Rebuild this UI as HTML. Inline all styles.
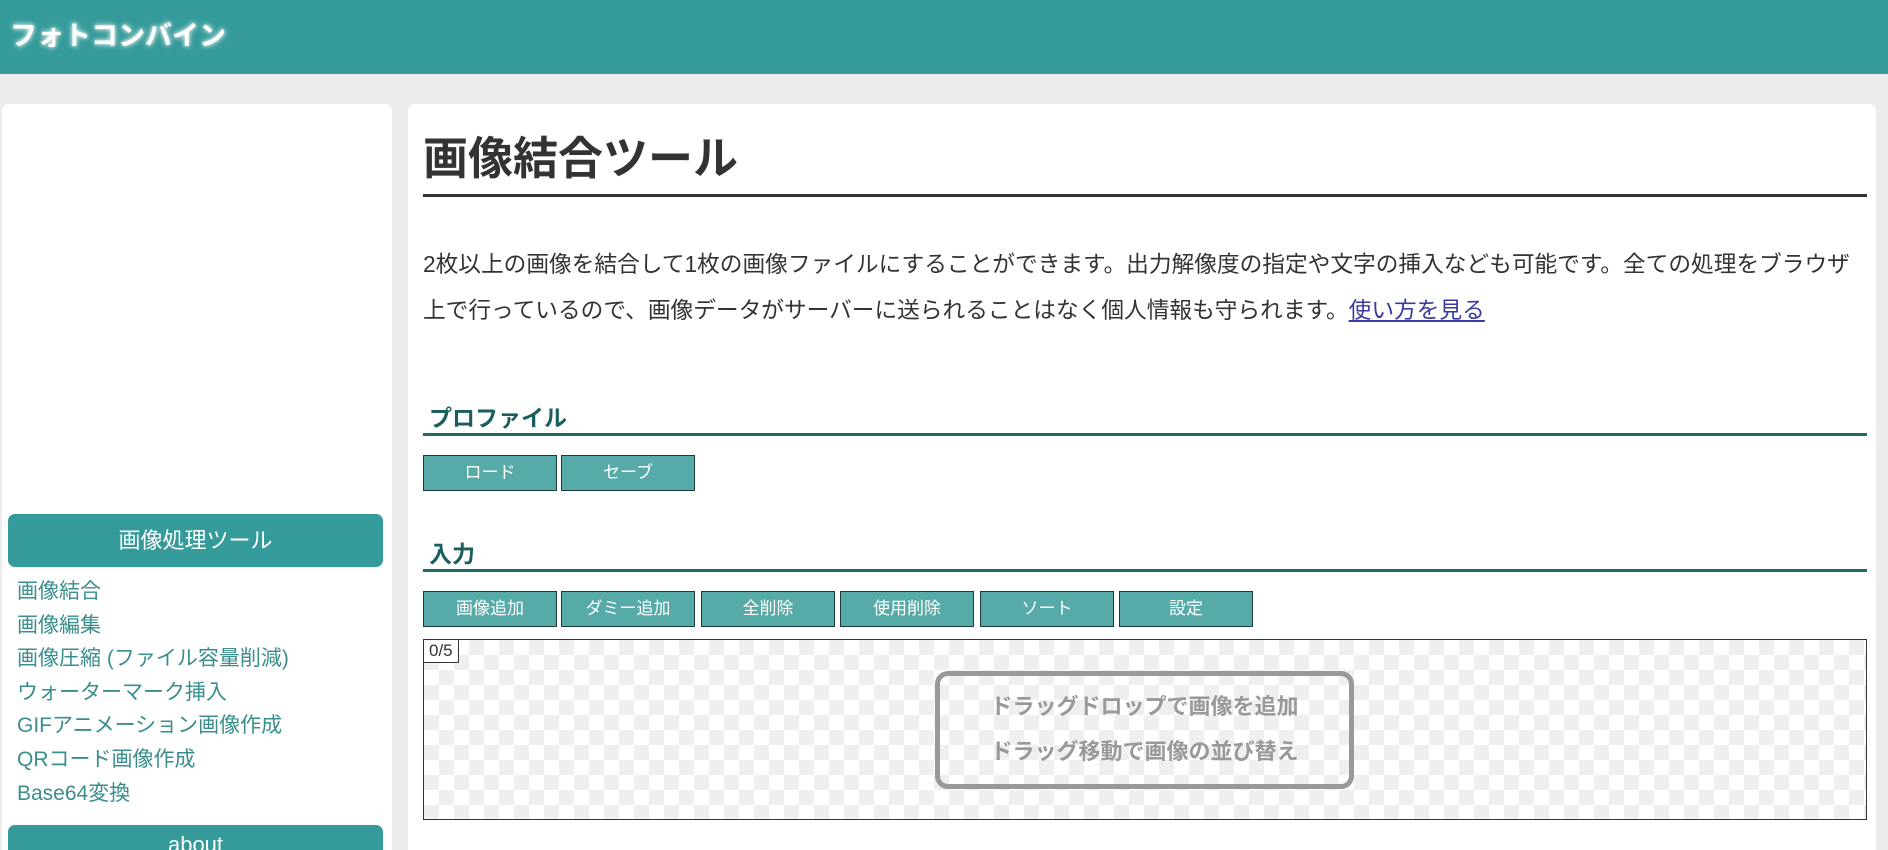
<!DOCTYPE html>
<html style="width:1888px;height:850px;overflow:hidden"><head><meta charset="utf-8"><style>
*{margin:0;padding:0;box-sizing:border-box}
body{width:1888px;height:850px;overflow:hidden;background:#ececec;font-family:"Liberation Sans","Noto Sans CJK JP",sans-serif;color:#333;position:relative}
.hdr{position:absolute;left:0;top:0;width:1888px;height:74px;background:#359b9a}
.hdr span{position:absolute;left:10px;top:14px;font-size:27px;font-weight:bold;color:#fff;text-shadow:0 0 6px #fff,0 0 3px #fff8}
.side{position:absolute;left:2px;top:104px;width:390px;height:746px;background:#fff;border-radius:7px 7px 0 0}
.sh{position:absolute;left:8px;width:375px;height:53px;background:#359b9a;border-radius:7px;color:#fff;font-size:22px;text-align:center;line-height:53px}
.links{position:absolute;left:17px;top:575px;font-size:21px;color:#3a8f8c;line-height:33.6px}
.main{position:absolute;left:408px;top:104px;width:1468px;height:746px;background:#fff;border-radius:7px 7px 0 0}
h1{position:absolute;left:423px;top:122px;font-size:45px;font-weight:bold;color:#333}
.hr{position:absolute;left:423px;width:1444px}
p{position:absolute;left:423px;top:241px;font-size:22.7px;line-height:46px;color:#333;white-space:nowrap}
a{color:#3a3aa0;text-decoration:underline}
h2{position:absolute;left:429px;font-size:23px;font-weight:bold;color:#1a5f5e}
.btn{position:absolute;height:36px;width:134px;background:#56aaa7;border:1px solid #1b3b3a;color:#fff;font-size:17px;text-align:center;line-height:34px}
.drop{position:absolute;left:423px;top:639px;width:1444px;height:181px;border:1px solid #333;
background-color:#fff;background-image:linear-gradient(45deg,#efefef 25%,transparent 25%,transparent 75%,#efefef 75%),linear-gradient(45deg,#efefef 25%,transparent 25%,transparent 75%,#efefef 75%);background-size:30px 30px;background-position:0 0,15px 15px}
.tag{position:absolute;left:0;top:0;background:#fff;border-right:1px solid #333;border-bottom:1px solid #333;font-size:17px;padding:0 5px;line-height:22px}
.box{position:absolute;left:511px;top:31px;width:419px;height:118px;border:5px solid #999;border-radius:13px;color:#999;font-weight:bold;font-size:22px;text-align:center;line-height:45px;padding-top:8px}
</style></head><body>
<div class="hdr"><span>フォトコンバイン</span></div>
<div class="side"></div>
<div class="sh" style="top:514px">画像処理ツール</div>
<div class="links">画像結合<br>画像編集<br>画像圧縮 (ファイル容量削減)<br>ウォーターマーク挿入<br>GIFアニメーション画像作成<br>QRコード画像作成<br>Base64変換</div>
<div class="sh" style="top:825px;height:25px;line-height:40px;border-radius:7px 7px 0 0;overflow:hidden">about</div>
<div class="main"></div>
<h1>画像結合ツール</h1>
<div class="hr" style="top:194px;height:3px;background:#333"></div>
<p>2枚以上の画像を結合して1枚の画像ファイルにすることができます。出力解像度の指定や文字の挿入なども可能です。全ての処理をブラウザ<br>上で行っているので、画像データがサーバーに送られることはなく個人情報も守られます。<a>使い方を見る</a></p>
<h2 style="top:399px">プロファイル</h2>
<div class="hr" style="top:433px;height:3px;background:#1f6b66"></div>
<div class="btn" style="left:423px;top:455px">ロード</div>
<div class="btn" style="left:561px;top:455px">セーブ</div>
<h2 style="top:535px">入力</h2>
<div class="hr" style="top:569px;height:3px;background:#1f6b66"></div>
<div class="btn" style="left:423px;top:591px">画像追加</div>
<div class="btn" style="left:561px;top:591px">ダミー追加</div>
<div class="btn" style="left:701px;top:591px">全削除</div>
<div class="btn" style="left:840px;top:591px">使用削除</div>
<div class="btn" style="left:980px;top:591px">ソート</div>
<div class="btn" style="left:1119px;top:591px">設定</div>
<div class="drop"><div class="tag">0/5</div><div class="box">ドラッグドロップで画像を追加<br>ドラッグ移動で画像の並び替え</div></div>
</body></html>
